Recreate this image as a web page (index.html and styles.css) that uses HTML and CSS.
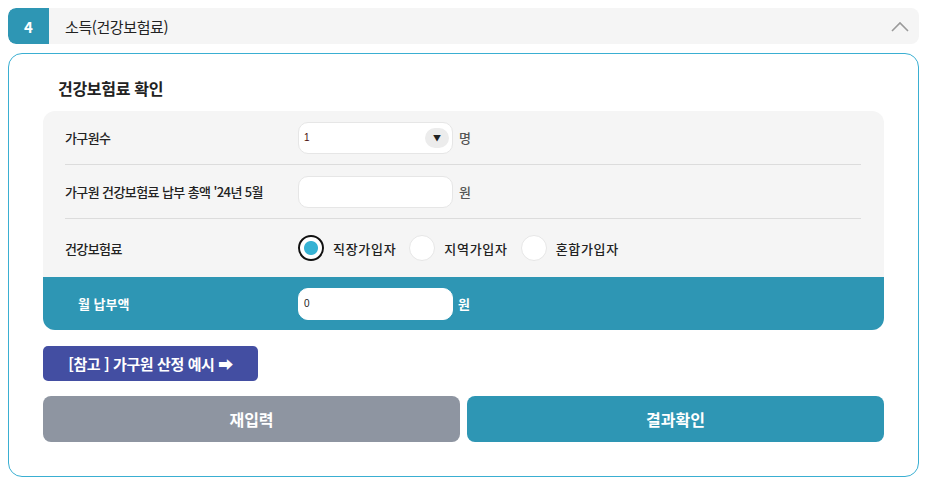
FILE: index.html
```html
<!DOCTYPE html>
<html lang="ko">
<head>
    <meta charset="UTF-8">
    <meta name="viewport" content="width=device-width, initial-scale=1.0">
    <title>소득(건강보험료)</title>
    <link rel="stylesheet" href="styles.css">
</head>
<body>
    <div class="step-head">
        <div class="step-num">4</div>
        <div class="step-title">소득(건강보험료)</div>
        <svg class="step-toggle" width="18" height="11" viewBox="0 0 18 11">
            <polyline points="1,10 9,2 17,10" fill="none" stroke="#9a9a9a" stroke-width="1.6"/>
        </svg>
    </div>

    <div class="step-body">
        <h2 class="sec-title">건강보험료 확인</h2>
        <div class="form-panel">
            <div class="form-row">
                <div class="form-label">가구원수</div>
                <div class="form-field">
                    <div class="select-box">
                        <span class="val">1</span>
                        <span class="select-arrow">&#9660;</span>
                    </div>
                    <span class="unit">명</span>
                </div>
            </div>
            <div class="form-row">
                <div class="form-label">가구원 건강보험료 납부 총액 '24년 5월</div>
                <div class="form-field">
                    <div class="text-box"></div>
                    <span class="unit">원</span>
                </div>
            </div>
            <div class="form-row radios">
                <div class="form-label">건강보험료</div>
                <div class="form-field">
                    <label class="radio checked"><span class="dot"></span>직장가입자</label>
                    <label class="radio"><span class="dot"></span>지역가입자</label>
                    <label class="radio"><span class="dot"></span>혼합가입자</label>
                </div>
            </div>
            <div class="form-row total">
                <div class="form-label">월 납부액</div>
                <div class="form-field">
                    <div class="text-box"><span class="val">0</span></div>
                    <span class="unit">원</span>
                </div>
            </div>
        </div>

        <button class="btn-ref">[참고 ] 가구원 산정 예시 &#10145;</button>

        <div class="btn-row">
            <button class="btn btn-reset">재입력</button>
            <button class="btn btn-submit">결과확인</button>
        </div>
    </div>
</body>
</html>
```

FILE: styles.css
```css
body {
    margin: 0;
    padding: 8px 11px 0 8px;
    background-color: #fff;
    font-family: "Noto Sans CJK KR", "Noto Sans", sans-serif;
    color: #222;
}
.step-head {
    display: flex;
    align-items: center;
    height: 36px;
    background-color: #f5f5f5;
    border-radius: 8px;
    overflow: hidden;
}
.step-num {
    width: 41px;
    height: 100%;
    display: flex;
    justify-content: center;
    align-items: center;
    background-color: #2e96b4;
    color: #fff;
    font-size: 15px;
    font-weight: bold;
    border-radius: 8px 0 0 8px;
}
.step-title {
    flex: 1;
    padding-left: 16px;
    font-size: 15px;
    letter-spacing: -0.4px;
}
.step-toggle {
    margin-right: 10px;
}
.step-body {
    margin-top: 9px;
    border: 1px solid #3aafd2;
    border-radius: 14px;
    padding: 23px 34px 34px;
}
.sec-title {
    margin: 0 0 12px 15px;
    font-size: 16px;
    line-height: 22px;
    font-weight: bold;
    letter-spacing: -0.3px;
}
.form-panel {
    background-color: #f5f5f5;
    border-radius: 12px;
    overflow: hidden;
}
.form-row {
    display: flex;
    align-items: center;
    height: 53px;
    margin: 0 23px 0 22px;
    border-bottom: 1px solid #dcdcdc;
}
.form-row.radios {
    height: 58px;
    border-bottom: none;
}
.form-label {
    width: 233px;
    font-size: 13px;
    font-weight: 500;
    letter-spacing: -0.6px;
}
.form-field {
    display: flex;
    align-items: center;
}
.select-box, .text-box {
    width: 155px;
    height: 32px;
    box-sizing: border-box;
    background-color: #fff;
    border: 1px solid #e6e6e6;
    border-radius: 10px;
    display: flex;
    align-items: center;
    padding: 0 3px 0 5px;
}
.val {
    flex: 1;
    font-size: 10px;
    font-family: "Liberation Sans", sans-serif;
    color: #4a0b0b;
}
.select-arrow {
    width: 24px;
    height: 20px;
    border-radius: 10px;
    background-color: #ececec;
    display: flex;
    justify-content: center;
    align-items: center;
    font-size: 8px;
    color: #222;
}
.unit {
    margin-left: 6px;
    font-size: 13px;
    font-weight: 500;
    color: #555;
}
.radio {
    display: flex;
    align-items: center;
    font-size: 13px;
    font-weight: 500;
    letter-spacing: 0.7px;
    margin-right: 13px;
}
.radio .dot {
    width: 26px;
    height: 26px;
    box-sizing: border-box;
    border-radius: 50%;
    background-color: #fff;
    border: 1px solid #e6e6e6;
    margin-right: 9px;
}
.radio.checked .dot {
    border: 2px solid #111;
    background: radial-gradient(circle, #36b2d3 6.5px, #fff 7.5px);
}
.form-row.total {
    margin: 0;
    padding-left: 35px;
    border-bottom: none;
    background-color: #2e96b4;
}
.form-row.total .form-label {
    width: 220px;
    color: #fff;
    font-weight: bold;
    letter-spacing: 0;
}
.form-row.total .text-box {
    border-color: #fff;
}
.form-row.total .val {
    color: #222;
}
.form-row.total .unit {
    color: #fff;
    font-weight: bold;
    margin-left: 5px;
}
.btn-ref {
    display: block;
    margin-top: 16px;
    width: 215px;
    height: 35px;
    border: none;
    border-radius: 5px;
    background-color: #434ea2;
    color: #fff;
    font-family: inherit;
    font-size: 15px;
    font-weight: bold;
    letter-spacing: -0.4px;
}
.btn-row {
    display: flex;
    gap: 7px;
    margin-top: 15px;
}
.btn {
    flex: 1;
    height: 46px;
    border: none;
    border-radius: 8px;
    color: #fff;
    font-family: inherit;
    font-size: 16px;
    font-weight: bold;
    letter-spacing: 0;
}
.btn-reset {
    background-color: #8e95a1;
}
.btn-submit {
    background-color: #2e96b4;
}
```
